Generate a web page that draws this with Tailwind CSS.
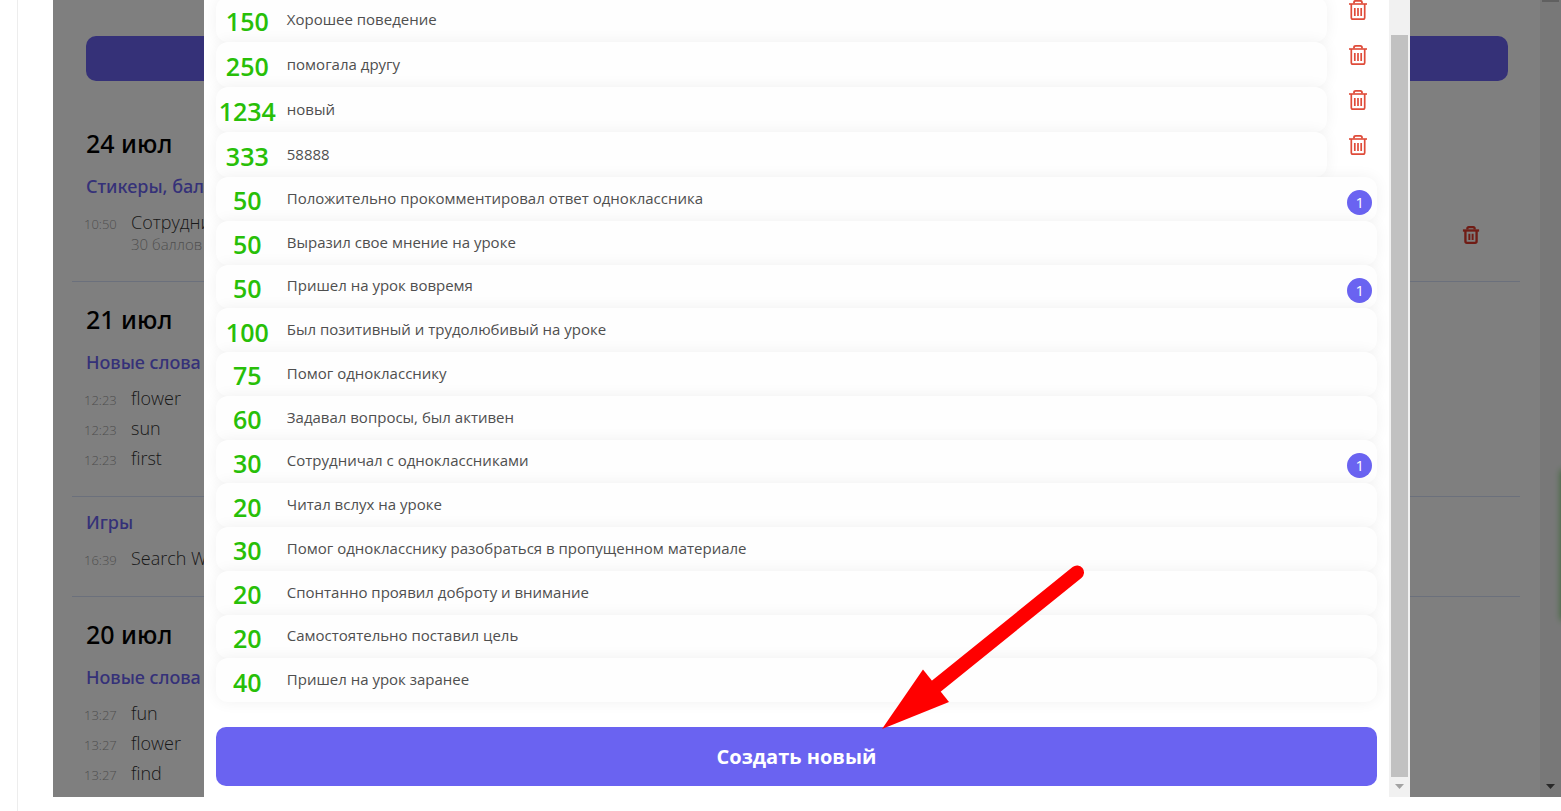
<!DOCTYPE html>
<html lang="ru">
<head>
    <meta charset="UTF-8">
    <meta name="viewport" content="width=device-width, initial-scale=1.0">
    <title>Баллы</title>
    <script src="https://cdn.jsdelivr.net/npm/@tailwindcss/browser@4"></script>
</head>
<body class="bg-white font-['Open_Sans',sans-serif]">
<svg class="hidden">
    <symbol id="trash" viewBox="0 0 20 22" fill="none" stroke="currentColor">
        <path d="M1 5h18" stroke-width="1.600"/>
        <path d="M6 4.500V3.500Q6 1.800 7.700 1.800H12.300Q14 1.800 14 3.500V4.500" stroke-width="1.800"/>
        <path d="M3.300 5V18.500Q3.300 20.200 5 20.200H15Q16.700 20.200 16.700 18.500V5" stroke-width="1.700"/>
        <path d="M6.800 9v8M10 9v8M13.200 9v8" stroke-width="1.700"/>
    </symbol>
    <symbol id="trash-bold" viewBox="0 0 20 22" fill="none" stroke="currentColor" stroke-width="2.600">
        <path d="M1 6h18"/>
        <path d="M6 5V3.800Q6 2.200 7.500 2.200H12.500Q14 2.200 14 3.800V5"/>
        <path d="M3.800 6V18Q3.800 19.800 5.500 19.800H14.500Q16.200 19.800 16.200 18V6"/>
        <path d="M8.200 9.500v7M11.800 9.500v7" stroke-width="2.200"/>
    </symbol>
</svg>

<div class="h-screen overflow-hidden ml-[17px] border-l border-[#ededed] pl-[35px] pb-[14px]">
    <div class="relative h-full overflow-hidden">

        <!-- history -->
        <div class="flex h-full">
            <main class="grow pl-[19px] pr-5 pt-9">
                <button type="button" aria-label="Добавить" class="block w-[calc(100%-26px)] ml-[14px] h-[45px] rounded-[10px] bg-[#6a63f1]"></button>

                <section class="mt-6 pt-5 pb-[23px] px-[14px]">
                    <h2 class="text-[25px] leading-9 font-['Noto_Sans'] font-medium text-black">24 июл</h2>
                    <h3 class="mt-[13px] text-lg leading-6 font-['Noto_Sans'] font-medium text-[#6a63f1]">Стикеры, баллы</h3>
                    <ul class="mt-[9px] -ml-[2px]">
                        <li class="flex py-[3px]">
                            <time class="w-[47px] text-[13px] leading-7 font-light text-[#a0a0a0]">10:50</time>
                            <div class="grow">
                                <p class="text-lg leading-6 font-light text-[#333]">Сотрудничал с одноклассниками</p>
                                <p class="text-[15px] leading-[21px] font-light text-[#a0a0a0]">30 баллов</p>
                            </div>
                            <button type="button" aria-label="Удалить" class="self-end mb-[10px] mr-[26px] text-[#e0392a]"><svg class="block w-[18px] h-5"><use href="#trash-bold"/></svg></button>
                        </li>
                    </ul>
                </section>

                <section class="border-t border-[#d6e0f8] pt-[19px] pb-[23px] px-[14px]">
                    <h2 class="text-[25px] leading-9 font-['Noto_Sans'] font-medium text-black">21 июл</h2>
                    <h3 class="mt-[13px] text-lg leading-6 font-['Noto_Sans'] font-medium text-[#6a63f1]">Новые слова</h3>
                    <ul class="mt-[9px] -ml-[2px]" data-items="12:23 flower|12:23 sun|12:23 first"></ul>
                </section>

                <section class="border-t border-[#d6e0f8] pt-[13px] pb-[23px] px-[14px]">
                    <h3 class="text-lg leading-6 font-['Noto_Sans'] font-medium text-[#6a63f1]">Игры</h3>
                    <ul class="mt-[9px] -ml-[2px]" data-items="16:39 Search Words"></ul>
                </section>

                <section class="border-t border-[#d6e0f8] pt-[19px] px-[14px]">
                    <h2 class="text-[25px] leading-9 font-['Noto_Sans'] font-medium text-black">20 июл</h2>
                    <h3 class="mt-[13px] text-lg leading-6 font-['Noto_Sans'] font-medium text-[#6a63f1]">Новые слова</h3>
                    <ul class="mt-[9px] -ml-[2px]" data-items="13:27 fun|13:27 flower|13:27 find"></ul>
                </section>
            </main>
            <div class="w-[21px] shrink-0 bg-[#f1f1f1] flex flex-col justify-between items-center">
                <div class="w-[17px] h-[2px] bg-[#c1c1c1]"></div>
                <svg class="w-[9px] h-[5px] mb-2" viewBox="0 0 9 5" fill="#505050"><path d="M0 0h9L4.500 5z"/></svg>
            </div>
        </div>
        <div class="absolute -right-5 top-[470px] w-5 h-[150px] shadow-[0_0_7px_#6cc860]"></div>

        <!-- modal -->
        <div class="absolute inset-0 bg-black/50">
            <div class="w-4/5 h-full mx-auto bg-white flex overflow-hidden">
                <div class="grow px-3">
                    <ul id="custom" class="-mt-[3px]"></ul>
                    <ul id="standard" class="grid auto-rows-fr h-[525px]"></ul>
                    <button type="button" class="block w-full mt-[25px] h-[59px] rounded-[10px] bg-[#6a63f1] text-white text-xl font-bold">Создать новый</button>
                </div>
                <div class="w-[21px] shrink-0 bg-[#f1f1f1] pt-[35px] flex flex-col items-center">
                    <div class="w-[17px] grow bg-[#c1c1c1]"></div>
                    <svg class="w-[9px] h-[5px] mt-[7px] mb-2" viewBox="0 0 9 5" fill="#a3a3a3"><path d="M0 0h9L4.500 5z"/></svg>
                </div>
            </div>
        </div>

        <!-- pointer to the button -->
        <svg class="absolute left-[829px] top-[565px] w-[204px] h-[165px] pointer-events-none" viewBox="882 565 204 165">
            <path d="M1077 572.500L934 688" stroke="#f00" stroke-width="14" stroke-linecap="round"/>
            <path d="M882 729L923 669.500L949 702z" fill="#f00"/>
        </svg>
    </div>
</div>

<script>
    const custom = [
        [150, 'Хорошее поведение'],
        [250, 'помогала другу'],
        [1234, 'новый'],
        [333, '58888'],
    ];

    const standard = [
        [50, 'Положительно прокомментировал ответ одноклассника', 1],
        [50, 'Выразил свое мнение на уроке'],
        [50, 'Пришел на урок вовремя', 1],
        [100, 'Был позитивный и трудолюбивый на уроке'],
        [75, 'Помог однокласснику'],
        [60, 'Задавал вопросы, был активен'],
        [30, 'Сотрудничал с одноклассниками', 1],
        [20, 'Читал вслух на уроке'],
        [30, 'Помог однокласснику разобраться в пропущенном материале'],
        [20, 'Спонтанно проявил доброту и внимание'],
        [20, 'Самостоятельно поставил цель'],
        [40, 'Пришел на урок заранее'],
    ];

    function rowContent(points, name) {
        return `
            <span class="w-[63px] shrink-0 pt-[3px] text-center text-[25px] leading-9 font-semibold text-[#28bf08]">${points}</span>
            <span class="grow pl-2 pb-[2px] text-[15px] leading-6 text-[#4f4f4f]">${name}</span>`;
    }

    document.getElementById('custom').innerHTML = custom.map(([points, name]) => `
        <li class="flex h-[45px]">
            <div class="grow flex items-center rounded-xl bg-[#fefefe] shadow-[0_0_15px_rgba(0,0,0,0.06)]">${rowContent(points, name)}</div>
            <button type="button" aria-label="Удалить" class="w-[50px] shrink-0 pl-[21px] pt-[2px] self-start text-[#df4b39]"><svg class="block w-5 h-[22px]"><use href="#trash"/></svg></button>
        </li>`).join('');

    document.getElementById('standard').innerHTML = standard.map(([points, name, count]) => `
        <li class="flex items-center rounded-xl bg-[#fefefe] shadow-[0_0_15px_rgba(0,0,0,0.06)]">
            ${rowContent(points, name)}
            ${count ? `<span class="w-[25px] h-[25px] mt-2 mr-[5px] rounded-full bg-[#6a63f1] text-white text-[15px] leading-[25px] text-center">${count}</span>` : ''}
        </li>`).join('');

    document.querySelectorAll('[data-items]').forEach(list => {
        list.innerHTML = list.dataset.items.split('|').map(item => `
            <li class="flex py-[3px]">
                <time class="w-[47px] text-[13px] leading-7 -mb-1 font-light text-[#a0a0a0]">${item.slice(0, 5)}</time>
                <p class="text-lg leading-6 font-light text-[#333]">${item.slice(6)}</p>
            </li>`).join('');
    });
</script>
</body>
</html>
